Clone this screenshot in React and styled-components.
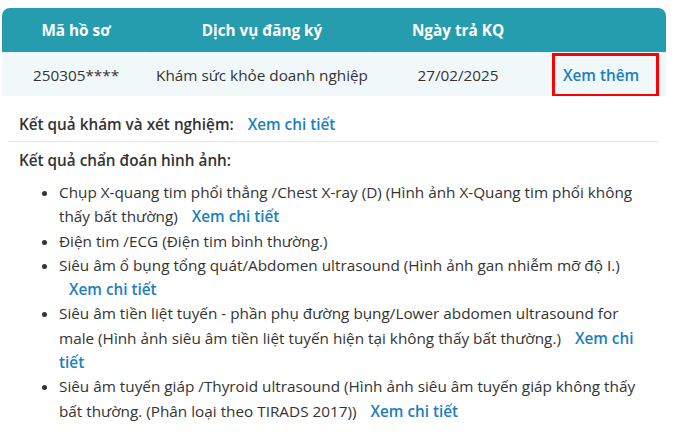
import React from "react";
import styled, { createGlobalStyle } from "styled-components";

const GlobalStyle = createGlobalStyle`
  body {
    margin: 0;
    background: #ffffff;
    font-family: "Segoe UI", "Open Sans", "Noto Sans", sans-serif;
    color: #333333;
  }
`;

const Page = styled.div`
  width: 677px;
  padding: 8px 11px 0 2px;
  box-sizing: border-box;
`;

const Table = styled.div`
  display: grid;
  grid-template-columns: 148px 224px 168px 124px;
  border-radius: 8px 8px 0 0;
  overflow: hidden;
`;

const HeadCell = styled.div`
  background: #269caf;
  color: #ffffff;
  font-weight: 700;
  font-size: 15.3px;
  height: 44px;
  display: flex;
  align-items: center;
  justify-content: center;
`;

const Cell = styled.div`
  background: #f1f8fa;
  font-size: 15.3px;
  height: 44px;
  display: flex;
  align-items: center;
  justify-content: ${(p) => (p.start ? "flex-start" : "center")};
  border-top: 1px dotted #e3eef1;
  box-sizing: border-box;
`;

const MoreLink = styled.a`
  color: #1a7fc1;
  font-weight: 600;
  text-decoration: none;
  border: 3px solid #ff0000;
  padding: 9px 0 9px 8px;
  width: 107px;
  margin-left: 10px;
  box-sizing: border-box;
`;

const Body = styled.div`
  padding: 0 8px 0 7px;
  font-size: 15.3px;
`;

const Section = styled.div`
  padding: ${(p) => (p.divider ? "18px 10px 7px" : "8px 10px 7px")};
  font-weight: 600;
  display: flex;
  align-items: center;
  gap: 14px;
  border-bottom: ${(p) => (p.divider ? "1px solid #e6e6e6" : "none")};
`;

const Link = styled.a`
  color: #1a7fc1;
  font-weight: 600;
  text-decoration: none;
  margin-left: ${(p) => p.offset || 0}px;
`;

const List = styled.ul`
  margin: 3px 0 0;
  padding-left: 50px;
  line-height: 24.3px;
`;

const Item = styled.li`
  padding-right: 4px;
`;

const items = [
  {
    text: "Chụp X-quang tim phổi thẳng /Chest X-ray (D) (Hình ảnh X-Quang tim phổi không thấy bất thường)",
    link: true,
  },
  { text: "Điện tim /ECG (Điện tim bình thường.)", link: false },
  {
    text: "Siêu âm ổ bụng tổng quát/Abdomen ultrasound (Hình ảnh gan nhiễm mỡ độ I.)",
    link: true,
  },
  {
    text: "Siêu âm tiền liệt tuyến - phần phụ đường bụng/Lower abdomen ultrasound for male (Hình ảnh siêu âm tiền liệt tuyến hiện tại không thấy bất thường.)",
    link: true,
  },
  {
    text: "Siêu âm tuyến giáp /Thyroid ultrasound (Hình ảnh siêu âm tuyến giáp không thấy bất thường. (Phân loại theo TIRADS 2017))",
    link: true,
  },
];

export default function App() {
  return (
    <Page>
      <GlobalStyle />
      <Table>
        <HeadCell>Mã hồ sơ</HeadCell>
        <HeadCell>Dịch vụ đăng ký</HeadCell>
        <HeadCell>Ngày trả KQ</HeadCell>
        <HeadCell />
        <Cell>250305****</Cell>
        <Cell>Khám sức khỏe doanh nghiệp</Cell>
        <Cell>27/02/2025</Cell>
        <Cell start>
          <MoreLink>Xem thêm</MoreLink>
        </Cell>
      </Table>
      <Body>
        <Section divider>
          Kết quả khám và xét nghiệm:
          <Link>Xem chi tiết</Link>
        </Section>
        <Section>Kết quả chẩn đoán hình ảnh:</Section>
        <List>
          {items.map((it, i) => (
            <Item key={i}>
              {it.text}
              {it.link && (
                <>
                  {" "}
                  <Link offset={10}>Xem chi tiết</Link>
                </>
              )}
            </Item>
          ))}
        </List>
      </Body>
    </Page>
  );
}
